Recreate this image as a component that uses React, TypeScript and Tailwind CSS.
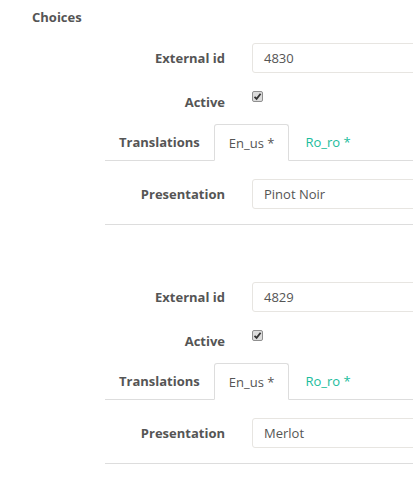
import React from "react";

const font = { fontFamily: '"Open Sans", "Noto Sans", Arial, sans-serif' };

function Check() {
  return (
    <span className="flex h-[11px] w-[11px] items-center justify-center rounded-[2px] border border-[#8f8f8f] bg-[#dcdcdc]">
      <svg width="9" height="9" viewBox="0 0 9 9">
        <path d="M1.5 4.8 L3.6 6.9 L7.6 1.8" fill="none" stroke="#333" strokeWidth="1.8" />
      </svg>
    </span>
  );
}

function Block({ id, name }: { id: string; name: string }) {
  return (
    <div className="ml-[105px]">
      <div className="flex items-center">
        <div className="w-[120px] shrink-0 text-right font-bold text-[#555]">External id</div>
        <div className="ml-[27px] flex h-[30px] w-[300px] shrink-0 items-center rounded-[3px] border border-[#e7e5e1] pl-[11px] text-[#555]">
          {id}
        </div>
      </div>
      <div className="mt-[18px] flex h-[20px] items-start">
        <div className="mt-[2px] w-[120px] shrink-0 text-right font-bold text-[#555]">Active</div>
        <div className="ml-[27px] shrink-0">
          <Check />
        </div>
      </div>
      <div className="mt-[13px] flex h-[37px] items-end border-b border-[#dddddd]">
        <div className="flex h-[36px] shrink-0 items-center px-[14px] font-bold text-[#555]">Translations</div>
        <div className="-mb-px flex h-[37px] shrink-0 items-center rounded-t-[3px] border border-[#dddddd] border-b-white bg-white px-[14px] text-[#555]">
          En_us *
        </div>
        <div className="flex h-[36px] shrink-0 items-center px-[16px] text-[#1abc9c]">Ro_ro *</div>
      </div>
      <div className="border-b border-[#dddddd] pt-[18px] pb-[15px]">
        <div className="flex items-center">
          <div className="w-[120px] shrink-0 text-right font-bold text-[#555]">Presentation</div>
          <div className="ml-[27px] flex h-[30px] w-[300px] shrink-0 items-center rounded-[3px] border border-[#e7e5e1] pl-[11px] text-[#555]">
            {name}
          </div>
        </div>
      </div>
    </div>
  );
}

export default function App() {
  return (
    <div style={font} className="h-[481px] w-[413px] overflow-hidden bg-white pt-[8px] text-[13px] leading-[18px]">
      <div className="pl-[32px] font-bold text-[#555]">Choices</div>
      <div className="mt-[17px]">
        <Block id="4830" name="Pinot Noir" />
      </div>
      <div className="mt-[57px]">
        <Block id="4829" name="Merlot" />
      </div>
    </div>
  );
}
